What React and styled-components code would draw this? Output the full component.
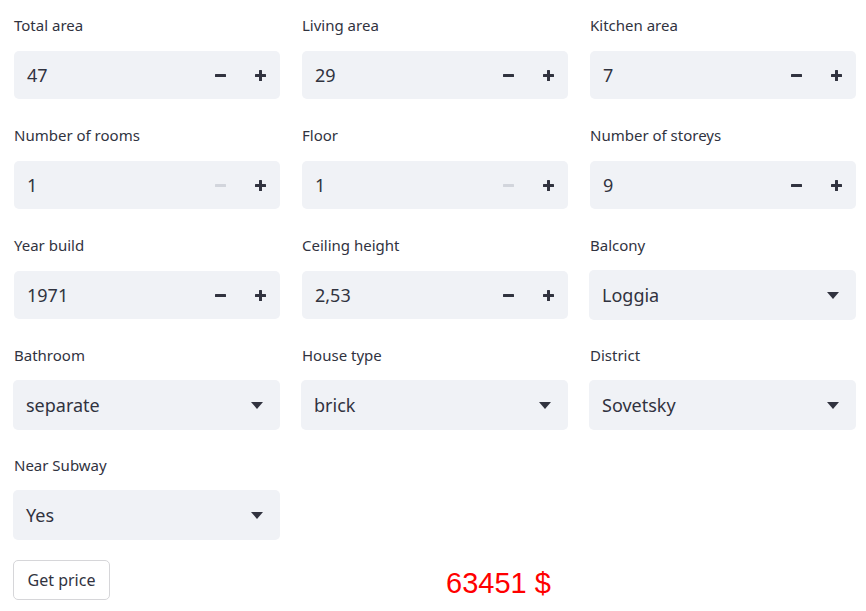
import React from 'react'
import styled, { createGlobalStyle } from 'styled-components'

const GlobalStyle = createGlobalStyle`
    body {
        margin: 0;
        background: #fff;
        font-family: "Noto Sans", "Open Sans", sans-serif;
        color: #31333f;
    }
`

const fields = [
    { label: 'Total area', type: 'number', value: '47' },
    { label: 'Living area', type: 'number', value: '29' },
    { label: 'Kitchen area', type: 'number', value: '7' },
    { label: 'Number of rooms', type: 'number', value: '1', minDisabled: true },
    { label: 'Floor', type: 'number', value: '1', minDisabled: true },
    { label: 'Number of storeys', type: 'number', value: '9' },
    { label: 'Year build', type: 'number', value: '1971' },
    { label: 'Ceiling height', type: 'number', value: '2,53' },
    { label: 'Balcony', type: 'select', value: 'Loggia' },
    { label: 'Bathroom', type: 'select', value: 'separate' },
    { label: 'House type', type: 'select', value: 'brick' },
    { label: 'District', type: 'select', value: 'Sovetsky' },
    { label: 'Near Subway', type: 'select', value: 'Yes' },
]

const MinusIcon = ({ disabled }) => (
    <svg width="11" height="11" viewBox="0 0 11 11">
        <rect x="0" y="4" width="11" height="3" rx="0.5" fill={disabled ? '#d2d5dc' : '#31333f'} />
    </svg>
)

const PlusIcon = () => (
    <svg width="11" height="11" viewBox="0 0 11 11">
        <rect x="0" y="4" width="11" height="3" rx="0.5" fill="#31333f" />
        <rect x="4" y="0" width="3" height="11" rx="0.5" fill="#31333f" />
    </svg>
)

const Caret = () => (
    <svg width="12" height="7" viewBox="0 0 12 7">
        <path d="M0 0 H12 L6 7 Z" fill="#31333f" />
    </svg>
)

const NumberInput = ({ value, minDisabled }) => (
    <NumberBox>
        <Value>{value}</Value>
        <StepButton><MinusIcon disabled={minDisabled} /></StepButton>
        <StepButton><PlusIcon /></StepButton>
    </NumberBox>
)

const Select = ({ value }) => (
    <SelectBox>
        <Value>{value}</Value>
        <CaretWrap><Caret /></CaretWrap>
    </SelectBox>
)

const App = () => {
    return (
        <Page>
            <GlobalStyle />
            <Grid>
                {fields.map((f) => (
                    <Field key={f.label}>
                        <Label>{f.label}</Label>
                        {f.type === 'number'
                            ? <NumberInput value={f.value} minDisabled={f.minDisabled} />
                            : <Select value={f.value} />}
                    </Field>
                ))}
            </Grid>
            <Footer>
                <Button>Get price</Button>
                <Price>63451 $</Price>
            </Footer>
        </Page>
    )
}

export default App

const Page = styled.div`
    padding: 13px 10px 0 13px;
`

const Grid = styled.div`
    display: grid;
    grid-template-columns: repeat(3, 1fr);
    column-gap: 21px;
    row-gap: 24px;
`

const Field = styled.div`
    display: flex;
    flex-direction: column;
`

const Label = styled.label`
    font-size: 15px;
    line-height: 24px;
    height: 24px;
    margin-bottom: 14px;
    padding-left: 1px;
`

const NumberBox = styled.div`
    display: flex;
    align-items: center;
    height: 48px;
    margin-left: 1px;
    background: #f0f2f6;
    border-radius: 5px;
`

const Value = styled.span`
    flex: 1;
    padding-left: 13px;
    font-size: 18px;
`

const StepButton = styled.div`
    width: 40px;
    height: 48px;
    display: flex;
    align-items: center;
    justify-content: center;
`

const SelectBox = styled.div`
    display: flex;
    align-items: center;
    height: 50px;
    margin: -1px 0;
    background: #f0f2f6;
    border-radius: 5px;
`

const CaretWrap = styled.div`
    width: 47px;
    display: flex;
    justify-content: center;
`

const Footer = styled.div`
    display: grid;
    grid-template-columns: 266px 1fr;
    align-items: center;
    margin-top: 21px;
`

const Button = styled.button`
    justify-self: start;
    height: 40px;
    width: 97px;
    padding: 0;
    background: #fff;
    border: 1px solid #d6d6d9;
    border-radius: 5px;
    font-family: inherit;
    font-size: 16px;
    color: #31333f;
`

const Price = styled.div`
    padding-left: 167px;
    font-family: "Liberation Sans", Arial, sans-serif;
    font-size: 29px;
    line-height: 34px;
    color: #ff0000;
    margin-top: 6px;
`
